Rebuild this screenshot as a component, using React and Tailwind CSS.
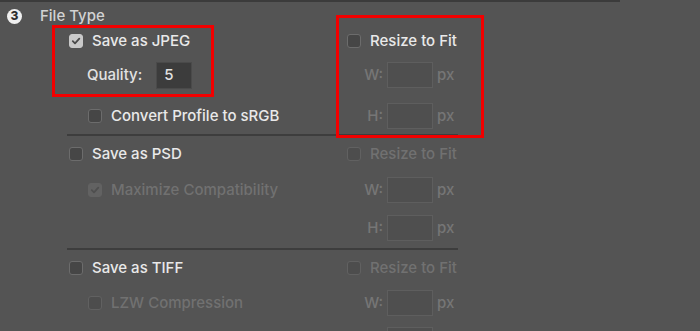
const Box = ({ checked, dim }) => (
  <span
    className={`w-[14px] h-[14px] rounded-[3px] border flex items-center justify-center shrink-0 ${
      checked
        ? dim
          ? 'bg-[#626262] border-[#626262]'
          : 'bg-[#c9c9c9] border-[#c9c9c9]'
        : dim
        ? 'bg-[#4d4d4d] border-[#616161]'
        : 'bg-[#464646] border-[#6c6c6c]'
    }`}
  >
    {checked && (
      <svg width="10" height="10" viewBox="0 0 10 10">
        <path
          d="M1.8 5.2 L4 7.3 L8.3 2.6"
          fill="none"
          stroke={dim ? '#4f4f4f' : '#4a4a4a'}
          strokeWidth="1.8"
          strokeLinecap="round"
          strokeLinejoin="round"
        />
      </svg>
    )}
  </span>
);

const Check = ({ label, checked, dim, indent }) => (
  <div className={`flex items-center gap-[9px] ${indent ? 'pl-[88px]' : 'pl-[69px]'}`}>
    <Box checked={checked} dim={dim} />
    <span className={`text-[15px] font-medium ${dim ? 'text-[#717171]' : 'text-[#e9e9e9]'}`}>
      {label}
    </span>
  </div>
);

const Resize = ({ dim }) => (
  <div className="flex items-center gap-[9px]">
    <Box dim={dim} />
    <span className={`text-[15px] font-medium ${dim ? 'text-[#717171]' : 'text-[#e9e9e9]'}`}>
      Resize to Fit
    </span>
  </div>
);

const Dim = ({ label }) => (
  <div className="flex items-center text-[15px] font-medium text-[#767676]">
    <span className="w-[36px] text-right">{label}:</span>
    <span className="ml-[4px] w-[46px] h-[26px] bg-[#4f4f4f] border border-[#5e5e5e]" />
    <span className="ml-[4px]">px</span>
  </div>
);

const Row = ({ h, left, right }) => (
  <div className={`grid grid-cols-[347px_1fr] items-center ${h}`}>
    <div>{left}</div>
    <div>{right}</div>
  </div>
);

const Sep = () => <div className="ml-[67px] w-[391px] h-[2px] bg-[#3d3d3d]" />;

export default function App() {
  return (
    <div
      className="relative w-[700px] h-[331px] overflow-hidden bg-[#545454]"
      style={{ fontFamily: 'Inter, "Liberation Sans", Arial, sans-serif' }}
    >
      <div className="w-[620px] h-[2px] bg-[#3b3b3b]" />

      {/* Header */}
      <div className="flex items-center h-[28px] pl-[7px]">
        <span className="w-[15px] h-[15px] rounded-full bg-[#efefef] flex items-center justify-center text-[12px] font-extrabold leading-none text-[#2e2e2e]">
          3
        </span>
        <span className="ml-[18px] text-[15px] font-medium text-[#d2d2d2]">File Type</span>
      </div>

      {/* JPEG */}
      <Row h="h-[22px]" left={<Check label="Save as JPEG" checked />} right={<Resize />} />
      <Row
        h="h-[46px]"
        left={
          <div className="flex items-center pl-[87px] text-[15px] font-medium text-[#e2e2e2]">
            <span>Quality:</span>
            <span className="ml-[14px] w-[36px] h-[27px] bg-[#3c3c3c] border border-[#4a4a4a] pl-[7px] flex items-center">
              5
            </span>
          </div>
        }
        right={<Dim label="W" />}
      />
      <Row h="h-[36px]" left={<Check label="Convert Profile to sRGB" indent />} right={<Dim label="H" />} />
      <Sep />

      {/* PSD */}
      <Row h="h-[36px]" left={<Check label="Save as PSD" />} right={<Resize dim />} />
      <Row h="h-[36px]" left={<Check label="Maximize Compatibility" checked dim indent />} right={<Dim label="W" />} />
      <Row h="h-[40px]" left={null} right={<Dim label="H" />} />
      <Sep />

      {/* TIFF */}
      <Row h="h-[36px]" left={<Check label="Save as TIFF" />} right={<Resize dim />} />
      <Row h="h-[34px]" left={<Check label="LZW Compression" dim indent />} right={<Dim label="W" />} />
      <div className="ml-[387px] mt-[7px] w-[46px] h-[26px] bg-[#4f4f4f] border border-[#5e5e5e]" />

      {/* annotations */}
      <div className="absolute left-[52px] top-[25px] w-[162px] h-[72px] border-[3px] border-[#f20000]" />
      <div className="absolute left-[336px] top-[15px] w-[148px] h-[123px] border-[3px] border-[#f20000]" />
    </div>
  );
}
